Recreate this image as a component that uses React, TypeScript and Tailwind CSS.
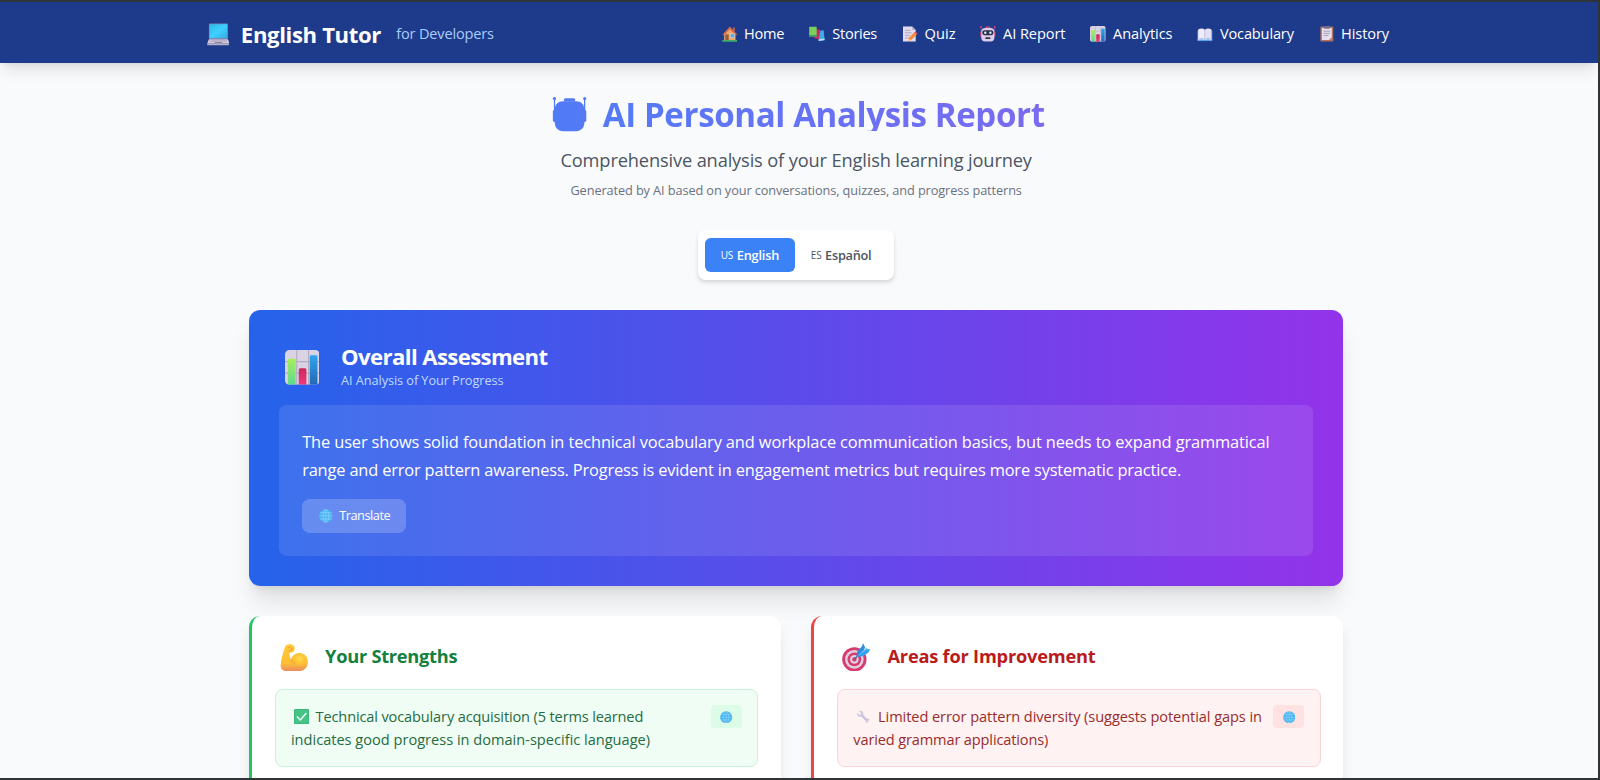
import type { ReactNode } from "react";

type IconProps = { className?: string };

function Laptop({ className }: IconProps) {
  return (
    <svg viewBox="0 0 24 24" className={className}>
      <defs>
        <linearGradient id="screen" x1="0" y1="0" x2="1" y2="1">
          <stop offset="0" stopColor="#2fb6e6" />
          <stop offset="0.5" stopColor="#3fd0ff" />
          <stop offset="1" stopColor="#35a9e0" />
        </linearGradient>
      </defs>
      <rect x="2" y="0.5" width="20" height="16.5" rx="1" fill="#7d86a8" />
      <rect x="2.8" y="1.3" width="18.4" height="14.6" fill="url(#screen)" />
      <path d="M2 17h20l1.8 4.6H0.2z" fill="#d3cbe0" />
      <path d="M3.5 18h17M3 19.3h18" stroke="#9d95b0" strokeWidth="0.6" />
      <rect x="8" y="20" width="8" height="1.2" fill="#8f87a0" />
      <rect x="0.2" y="21.6" width="23.6" height="1.9" rx="0.6" fill="#b9afc8" />
    </svg>
  );
}

function House({ className }: IconProps) {
  return (
    <svg viewBox="0 0 16 16" className={className}>
      <rect x="11.2" y="1.5" width="2" height="4" fill="#b5654a" />
      <path d="M2.2 7.5 8 2l5.8 5.5V14.5H2.2z" fill="#eda868" />
      <path d="M0.6 8.6 8 0.6l7.4 8-1.3 1L8 3.2 1.9 9.6z" fill="#d8684a" />
      <rect x="3.4" y="8.6" width="3.4" height="6" fill="#9a5a40" />
      <rect x="8.6" y="8" width="4.2" height="4" fill="#5ca8da" stroke="#d9e3ee" strokeWidth="0.5" />
      <rect x="0.2" y="14.2" width="15.6" height="1.8" rx="0.6" fill="#3fae68" />
    </svg>
  );
}

function Books({ className }: IconProps) {
  return (
    <svg viewBox="0 0 16 16" className={className}>
      <path d="M9.5 5.2 15 4.4l1 10.2-5.6 1z" fill="#42a9e8" />
      <path d="M9.6 13.6 15.7 12.8l.2 1.6-6 1z" fill="#b8dcf3" />
      <path d="M6.6 2.8 11.6 4 10.2 13.6 5.4 12.4z" fill="#c92c66" />
      <rect x="0.2" y="0.8" width="7.6" height="10" rx="0.6" fill="#7bd05c" />
      <rect x="0.2" y="9.2" width="7.6" height="1.8" fill="#3f9b62" />
    </svg>
  );
}

function Memo({ className }: IconProps) {
  return (
    <svg viewBox="0 0 16 16" className={className}>
      <path d="M1 0.5h9.4l3.6 3.6V15.8H1z" fill="#e3dcef" />
      <path d="M10.4 0.5v3.6H14z" fill="#b9aecd" />
      <path d="M3 4.4h5.800M3 7h7M3 9.600h5M3 12.200h3.400" stroke="#9f98b4" strokeWidth="0.8" />
      <path d="m12.6 6.4 2.6 2.2-6.2 6-3 .8 .6-3z" fill="#f58a3c" />
      <path d="m12.6 6.4 1.2-.9 2.2 2-.8 1.1z" fill="#e0486a" />
      <path d="m6.6 12.4 2.4 2.2-3 .8z" fill="#f5cfa5" />
    </svg>
  );
}

function Robot({ className }: IconProps) {
  return (
    <svg viewBox="0 0 16 16" className={className}>
      <path d="M1.1 1v7M14.9 1v7" stroke="#9c5db8" strokeWidth="0.6" />
      <circle cx="1" cy="1" r="0.9" fill="#ee3f6e" />
      <circle cx="15" cy="1" r="0.9" fill="#ee3f6e" />
      <rect x="0.2" y="6" width="2" height="5" rx="0.9" fill="#d33b74" />
      <rect x="13.8" y="6" width="2" height="5" rx="0.9" fill="#d33b74" />
      <rect x="5.4" y="0.6" width="5.2" height="2" rx="0.8" fill="#cf4777" />
      <rect x="1.3" y="2" width="13.4" height="13.7" rx="4" fill="#d9cdea" />
      <rect x="2.3" y="4.4" width="11.4" height="5" rx="2.2" fill="#2d2f4a" />
      <circle cx="5.4" cy="6.9" r="1.2" fill="#d8f2ff" />
      <circle cx="10.6" cy="6.9" r="1.2" fill="#d8f2ff" />
      <rect x="5.4" y="11.4" width="5.2" height="1.9" rx="0.9" fill="#37304c" />
    </svg>
  );
}

function BarChart({ className }: IconProps) {
  return (
    <svg viewBox="0 0 36 36" className={className}>
      <defs>
        <linearGradient id="chartGreen" x1="0" y1="0" x2="0" y2="1">
          <stop offset="0" stopColor="#a8ee5c" />
          <stop offset="1" stopColor="#5fd890" />
        </linearGradient>
        <linearGradient id="chartPink" x1="0" y1="0" x2="0" y2="1">
          <stop offset="0" stopColor="#c92a5c" />
          <stop offset="1" stopColor="#f0367a" />
        </linearGradient>
        <linearGradient id="chartBlue" x1="0" y1="0" x2="0" y2="1">
          <stop offset="0" stopColor="#30a5ee" />
          <stop offset="1" stopColor="#2268b4" />
        </linearGradient>
        <clipPath id="chartClip">
          <rect width="36" height="36" rx="4.5" />
        </clipPath>
      </defs>
      <g clipPath="url(#chartClip)">
        <rect width="36" height="36" fill="#dad3e3" />
        <path d="M12.2 0v36M24.5 0v36M0 12h36M0 24h36" stroke="#b5abc4" strokeWidth="1.2" />
        <path d="M3 36V10.5a1.5 1.5 0 0 1 1.5-1.5h5a1.5 1.5 0 0 1 1.5 1.5V36z" fill="url(#chartGreen)" />
        <path d="M14.3 36V20.5a1.5 1.5 0 0 1 1.5-1.5h4.9a1.5 1.5 0 0 1 1.5 1.5V36z" fill="url(#chartPink)" />
        <path d="M25.7 36V7a1.5 1.5 0 0 1 1.5-1.5h5a1.5 1.5 0 0 1 1.5 1.5V36z" fill="url(#chartBlue)" />
      </g>
    </svg>
  );
}

function OpenBook({ className }: IconProps) {
  return (
    <svg viewBox="0 0 16 16" className={className}>
      <path d="M0.3 4.5h15.4V15.4H0.3z" fill="#3f8fdc" />
      <path d="M0.8 13.3h14.4v1.3H0.8z" fill="#a9cdf2" />
      <path d="M1.2 3.6C3.6 2.2 6.4 2.4 8 3.8v9.6c-1.8-.9-4.6-.9-6.8 0z" fill="#f1ebfa" />
      <path d="M14.8 3.6C12.4 2.2 9.6 2.4 8 3.8v9.6c1.8-.9 4.6-.9 6.8 0z" fill="#e6def3" />
      <path d="M8 3.8v9.6" stroke="#b9b0cf" strokeWidth="0.6" />
    </svg>
  );
}

function Clipboard({ className }: IconProps) {
  return (
    <svg viewBox="0 0 16 16" className={className}>
      <rect x="1.4" y="0.5" width="13.2" height="15.3" rx="1" fill="#b0705c" />
      <path d="M2.9 2h10.2v9.6L10.3 14.4H2.9z" fill="#e6dff0" />
      <path d="M13.1 11.6v2.8h-2.8z" fill="#d68d6d" />
      <rect x="5" y="0" width="6" height="2.8" rx="0.6" fill="#766e8c" />
      <path d="M4.5 5.3h7M4.5 7.5h7M4.5 9.7h5" stroke="#958ca8" strokeWidth="0.8" />
    </svg>
  );
}

function RobotSilhouette({ className }: IconProps) {
  return (
    <svg viewBox="0 0 36 36" className={className}>
      <defs>
        <linearGradient id="silhouette" x1="0" y1="0" x2="1" y2="0">
          <stop offset="0" stopColor="#4f7bf6" />
          <stop offset="1" stopColor="#557af6" />
        </linearGradient>
      </defs>
      <g fill="url(#silhouette)">
        <circle cx="2.1" cy="1.7" r="1.7" />
        <circle cx="33.9" cy="1.7" r="1.7" />
        <rect x="1.5" y="1.7" width="1.3" height="14" />
        <rect x="33.2" y="1.7" width="1.3" height="14" />
        <rect x="12" y="1.2" width="12" height="3.6" rx="1.6" />
        <rect x="0.4" y="13.5" width="4" height="13" rx="1.9" />
        <rect x="31.6" y="13.5" width="4" height="13" rx="1.9" />
        <path d="M11 4.6h14c5 0 8.5 3.5 8.5 8.2V27.5c0 5-3.4 8.5-8.7 8.5h-13.6c-5.3 0-8.7-3.5-8.7-8.5V12.8C2.5 8.1 6 4.6 11 4.6z" />
      </g>
    </svg>
  );
}

function Globe({ className }: IconProps) {
  return (
    <svg viewBox="0 0 14 14" className={className}>
      <circle cx="7" cy="7" r="6.8" fill="#45b4f3" />
      <g fill="none" stroke="#93d4f8" strokeWidth="0.7">
        <ellipse cx="7" cy="7" rx="3" ry="6.6" />
        <path d="M7 0.2v13.6M0.2 7h13.6M1.2 3.8h11.6M1.2 10.2h11.6" />
      </g>
    </svg>
  );
}

function Biceps({ className }: IconProps) {
  return (
    <svg viewBox="0 0 30 30" className={className}>
      <defs>
        <linearGradient id="arm" x1="0" y1="0" x2="0" y2="1">
          <stop offset="0" stopColor="#ffc83a" />
          <stop offset="0.72" stopColor="#fdbd34" />
          <stop offset="1" stopColor="#ec8a62" />
        </linearGradient>
        <radialGradient id="muscle" cx="0.5" cy="0.4" r="0.6">
          <stop offset="0" stopColor="#ffe14d" />
          <stop offset="1" stopColor="#fdbd34" stopOpacity="0" />
        </radialGradient>
      </defs>
      <path
        d="M6.5 1.2C8.5-.3 12-.1 14.2 1.6c1.6 1.3 1.7 4.7.4 6.4-.9 1.3-3 1.7-4.6 1.3-.3 2.6.1 5.2 1.4 7.5C12.6 12.5 16.3 9.8 21 9.9c5 .1 8.7 4.2 8.8 9.5.1 6-3.6 10-9.8 10.2H6.5C2.3 29.6-.2 27 .2 22.6.7 16 3 9.5 4.7 4.2 5 3 5.5 1.9 6.5 1.2z"
        fill="url(#arm)"
      />
      <circle cx="21" cy="17.5" r="7.5" fill="url(#muscle)" />
      <path d="M11.4 16.8c.8 2.4 2.6 4 5 4.6" fill="none" stroke="#ee9a2e" strokeWidth="0.9" />
      <path d="M8.3 3.8c1.8-.8 4 .1 4 1.9s-1.7 2.4-3.2 1.7" fill="none" stroke="#ea9a2c" strokeWidth="1" />
    </svg>
  );
}

function Target({ className }: IconProps) {
  return (
    <svg viewBox="0 0 30 30" className={className}>
      <circle cx="13" cy="17.2" r="12.8" fill="#d63c6b" />
      <circle cx="13" cy="17.2" r="9.8" fill="#e3cfe2" />
      <circle cx="13" cy="17.2" r="7.2" fill="#d63c6b" />
      <circle cx="13" cy="17.2" r="4.6" fill="#e3cfe2" />
      <circle cx="13" cy="17.2" r="2.3" fill="#d63c6b" />
      <path d="M13 17.2 21 9.3" stroke="#55609c" strokeWidth="1.5" />
      <path d="M15.2 14.8 16 8.9 21.3 3.2 22 0l2.3 4.4L22.5 9z" fill="#2f8ce0" />
      <path d="M15.2 14.8 22.2 14 27.6 10.3 29.6 6.7 25.6 6.2 21.3 9z" fill="#35a3ec" />
      <path d="M15.2 14.8 25.7 4.7l1.2 1.2z" fill="#7fc8f7" />
    </svg>
  );
}

function CheckMark({ className }: IconProps) {
  return (
    <svg viewBox="0 0 16 16" className={className}>
      <rect width="16" height="16" rx="1.6" fill="#45c486" />
      <rect x="0.5" y="0.5" width="15" height="15" rx="1.3" fill="none" stroke="#3bb579" />
      <path d="m3.4 8.2 3.2 3.3 6-6.800" fill="none" stroke="#f4fff8" strokeWidth="1.5" strokeLinecap="round" strokeLinejoin="round" />
    </svg>
  );
}

function Wrench({ className }: IconProps) {
  return (
    <svg viewBox="0 0 16 16" className={className}>
      <path
        d="M2.3 1.3 4.9 3.7 4.4 5.3 2.9 5.6.5 3.3C-.1 5.3.6 7 2.3 7.8c1 .5 2 .5 3 .1l5.2 5.2c.1 1.8 1.3 2.9 3.1 2.7l-1-1.6.8-1.6 1.9.1c-.3-1.6-1.5-2.5-3.2-2.3L7.4 5.6c.5-1.1.3-2.5-.5-3.5-1.1-1.2-2.9-1.6-4.6-.8z"
        fill="#d0c7e0"
      />
      <path d="m5.6 7.2 5.4 5.4" stroke="#b9afd0" strokeWidth="0.7" />
    </svg>
  );
}

type NavEntry = { icon: ReactNode; label: string; box: string; text: string };

const iconClass = "h-[16.5px] w-[16.5px]";

const navItems: NavEntry[] = [
  { icon: <House className={iconClass} />, label: "Home", box: "w-[66px]", text: "tracking-[-0.016em]" },
  { icon: <Books className={iconClass} />, label: "Stories", box: "w-[71.5px]", text: "tracking-[-0.0198em]" },
  { icon: <Memo className={iconClass} />, label: "Quiz", box: "w-[56.5px]", text: "tracking-[0.0047em]" },
  { icon: <Robot className={iconClass} />, label: "AI Report", box: "w-[89.5px]", text: "tracking-[-0.0052em]" },
  { icon: <BarChart className={iconClass} />, label: "Analytics", box: "w-[86.5px]", text: "tracking-[-0.0047em]" },
  { icon: <OpenBook className={iconClass} />, label: "Vocabulary", box: "w-[101.5px]", text: "tracking-[-0.011em]" },
  { icon: <Clipboard className={iconClass} />, label: "History", box: "w-[74px]", text: "tracking-[-0.0069em]" },
];

function Navbar() {
  return (
    <nav className="bg-[#1e3a8a] pr-[6px] text-white shadow-lg">
      <div className="mx-auto flex h-16 max-w-[1280px] items-center justify-between pt-1 pr-4 pl-[19.5px]">
        <div className="flex items-center">
          <Laptop className="h-6 w-6" />
          <span className="mb-px ml-[12px] text-[23.3px] leading-8 font-bold tracking-[-0.0165em]">English Tutor</span>
          <span className="ml-[16px] text-[15.36px] tracking-[-0.012em] text-[#a9cdfd]">for Developers</span>
        </div>
        <div className="flex items-center gap-[26.2px]">
          {navItems.map((item) => (
            <a key={item.label} className={`flex items-center justify-between text-[15.36px] ${item.box}`}>
              {item.icon}
              <span className={item.text}>{item.label}</span>
            </a>
          ))}
        </div>
      </div>
    </nav>
  );
}

function Header() {
  return (
    <header className="mb-8 text-center">
      <div className="mb-[16.4px] flex h-10 items-center justify-center gap-[16px] pl-[5px]">
        <RobotSilhouette className="mt-[5px] h-[36px] w-[37px]" />
        <h1 className="h-[40.5px] bg-linear-to-r/srgb from-[#557af6] to-[#7a6af0] bg-clip-text pt-[3px] text-[34.9px] leading-10 font-bold tracking-[-0.0125em] text-transparent">
          AI Personal Analysis Report
        </h1>
      </div>
      <p className="text-[19.2px] leading-7 tracking-[-0.0078em] text-[#4b5563]">
        Comprehensive analysis of your English learning journey
      </p>
      <p className="mt-2 text-[13.44px] leading-5 tracking-[-0.0081em] text-[#6b7280]">
        Generated by AI based on your conversations, quizzes, and progress patterns
      </p>
    </header>
  );
}

function LanguageToggle() {
  return (
    <div className="mb-8 flex justify-center">
      <div className="flex gap-[1px] rounded-lg bg-white p-2 shadow-md">
        <button className="flex h-9 w-[94px] items-center rounded-md bg-[#3b82f6] pt-px pl-4 text-white">
          <span className="w-[17px] text-left text-[10.5px] font-medium tracking-[-0.02em]">US</span>
          <span className="text-[13.44px] font-semibold tracking-[-0.0156em]">English</span>
        </button>
        <button className="flex h-9 w-[96px] items-center rounded-md pt-px pl-4 text-[#4b5563]">
          <span className="w-[15px] text-left text-[10.5px] font-medium tracking-[-0.02em]">ES</span>
          <span className="text-[13.44px] font-semibold tracking-[-0.0208em]">Español</span>
        </button>
      </div>
    </div>
  );
}

function Assessment() {
  return (
    <section className="mb-8 rounded-xl bg-linear-to-r/srgb from-[#2563eb] to-[#9333ea] p-8 text-white shadow-xl">
      <div className="mb-4 flex h-[52px] items-center pl-[5.5px]">
        <BarChart className="mt-[5px] h-[36.5px] w-[36.5px]" />
        <div className="ml-[23px]">
          <h2 className="pt-[2px] text-[23.3px] leading-[30px] font-bold tracking-[-0.027em]">Overall Assessment</h2>
          <p className="pt-px text-[13.44px] leading-5 tracking-[-0.0061em] text-[#bfdbfe]">AI Analysis of Your Progress</p>
        </div>
      </div>
      <div className="rounded-lg bg-white/10 p-6">
        <p className="text-[17.28px] leading-[29.25px] whitespace-nowrap">
          <span className="tracking-[-0.0078em]">
            The user shows solid foundation in technical vocabulary and workplace communication basics, but needs to expand
            grammatical
          </span>
          <br />
          <span className="tracking-[-0.0104em]">
            range and error pattern awareness. Progress is evident in engagement metrics but requires more systematic
            practice.
          </span>
        </p>
        <button className="mt-4 flex h-9 w-[109px] items-center rounded-lg bg-white/20 pl-[18px]">
          <Globe className="h-[14.5px] w-[14.5px]" />
          <span className="ml-[6.5px] text-[13.44px] tracking-[-0.0364em]">Translate</span>
        </button>
      </div>
    </section>
  );
}

type CardProps = {
  border: string;
  title: string;
  titleClass: string;
  icon: ReactNode;
  box: string;
  badge: string;
  children: ReactNode;
};

function InsightCard({ border, title, titleClass, icon, box, badge, children }: CardProps) {
  return (
    <section className={`flex-1 rounded-xl border-l-4 bg-white p-6 shadow-lg ${border}`}>
      <div className="mb-[16.7px] flex h-9 items-center pl-[5px]">
        {icon}
        <h3 className={`ml-[18px] text-[19.2px] leading-7 font-bold ${titleClass}`}>{title}</h3>
      </div>
      <div className="space-y-3">
        <div className={`flex items-start justify-between rounded-lg border p-4 text-[15.36px] leading-6 ${box}`}>
          <p className="whitespace-nowrap">{children}</p>
          <button className={`flex h-6 w-[32.5px] shrink-0 items-center justify-center rounded ${badge}`}>
            <Globe className="h-[13px] w-[13px]" />
          </button>
        </div>
        <div className={`h-20 rounded-lg border ${box}`} />
      </div>
    </section>
  );
}

export default function App() {
  return (
    <div className="h-[780px] w-[1600px] overflow-hidden border-t-2 border-r-2 border-b-2 border-[#2f3438] bg-[#f9fafb] font-['Open_Sans','Noto_Sans',sans-serif]">
      <div className="w-full [zoom:0.95]">
        <Navbar />
        <div className="pr-[6px]">
          <main className="mx-auto max-w-[1152px] pt-8">
            <Header />
            <LanguageToggle />
            <Assessment />
            <div className="flex gap-8">
              <InsightCard
                border="border-[#22c55e]"
                title="Your Strengths"
                titleClass="text-[#15803d] tracking-[-0.015em]"
                icon={<Biceps className="mt-[3px] h-[29px] w-[30px]" />}
                box="border-[#c6f3d6] bg-[#f0fdf4] text-[#256c41]"
                badge="bg-[#dcfce7]"
              >
                <CheckMark className="mr-[7px] ml-[3px] inline h-[16px] w-[16px] align-[-2px]" />
                <span className="tracking-[-0.01em]">Technical vocabulary acquisition (5 terms learned</span>
                <br />
                <span>indicates good progress in domain-specific language)</span>
              </InsightCard>
              <InsightCard
                border="border-[#ef4444]"
                title="Areas for Improvement"
                titleClass="text-[#b91c1c] tracking-[-0.012em]"
                icon={<Target className="mt-px h-[30px] w-[30px]" />}
                box="border-[#fbd3d3] bg-[#fef2f2] text-[#992c2c]"
                badge="bg-[#fee2e2]"
              >
                <Wrench className="mr-[8px] ml-[4px] inline h-[14px] w-[14px] align-[-1px]" />
                <span className="tracking-[-0.005em]">Limited error pattern diversity (suggests potential gaps in</span>
                <br />
                <span className="tracking-[-0.01em]">varied grammar applications)</span>
              </InsightCard>
            </div>
          </main>
        </div>
      </div>
    </div>
  );
}
